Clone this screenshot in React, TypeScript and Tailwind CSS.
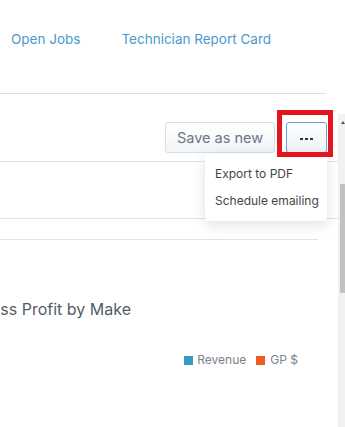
import React from "react";

const App = () => {
  return (
    <div className="relative w-[345px] h-[427px] overflow-hidden bg-white font-['Inter','Noto_Sans',sans-serif]">
      {/* Onglets */}
      <div className="flex h-[93px] items-start gap-[41px] pl-[11px] pt-[29px] text-[13.5px] text-[#4a9acb]">
        <span>Open Jobs</span>
        <span>Technician Report Card</span>
      </div>
      <div className="h-px w-[326px] bg-[#dedede]" />

      <div className="mt-[20px] flex">
        <div className="w-[338px]">
          {/* Barre d'actions */}
          <div className="flex justify-end gap-[11px] pr-[11px] pt-[8px]">
            <button className="h-[31px] w-[110px] rounded-[3px] border border-[#d7dde4] bg-gradient-to-b from-white to-[#f1f4f8] text-[14.5px] text-[#6b7686]">
              Save as new
            </button>
            <button className="flex h-[31px] w-[41px] items-center justify-center gap-[2px] rounded-[3px] border border-[#6d9fd8] bg-gradient-to-b from-white to-[#eef2f7] pt-[2px]">
              <span className="h-[2px] w-[3px] bg-[#333]" />
              <span className="h-[2px] w-[3px] bg-[#333]" />
              <span className="h-[2px] w-[3px] bg-[#333]" />
            </button>
          </div>
          <div className="mt-[8px] h-px w-full bg-[#dfe3e9]" />
          <div className="h-[56px]" />
          <div className="h-px w-full bg-[#dfe3e9]" />
          <div className="h-[20px]" />
          <div className="h-px w-[318px] bg-[#dfe3e9]" />

          {/* Graphique */}
          <div className="flex w-[131px] justify-end whitespace-nowrap pt-[57px] text-[16px] text-[#535c66]">
            Gross Profit by Make
          </div>
          <div className="mt-[30px] flex items-center justify-end pr-[40px] text-[12px] text-[#7a828c]">
            <span className="mr-[4px] h-[9px] w-[9px] bg-[#3a98c0]" />
            <span>Revenue</span>
            <span className="ml-[10px] mr-[5px] h-[9px] w-[9px] bg-[#f05a22]" />
            <span>GP $</span>
          </div>
        </div>

        {/* Barre de défilement */}
        <div className="relative h-[313px] w-[7px] bg-[#f1f1f1]">
          <svg className="absolute left-[3px] top-[7px]" width="4" height="3" viewBox="0 0 4 3">
            <path d="M2 0 L4 3 L0 3 Z" fill="#505050" />
          </svg>
          <div className="absolute left-[2px] top-[70px] h-[109px] w-[5px] bg-[#c1c1c1]" />
        </div>
      </div>

      {/* Menu déroulant */}
      <div className="absolute left-[205px] top-[153px] w-[122px] rounded-[4px] bg-white py-[9px] pl-[10px] text-[12px] text-[#444] shadow-[0_4px_14px_rgba(0,0,0,0.12)]">
        <div className="h-[25px] leading-[23px]">Export to PDF</div>
        <div className="h-[25px] leading-[27px]">Schedule emailing</div>
      </div>

      {/* Surlignage */}
      <div className="absolute left-[277px] top-[110px] h-[47px] w-[56px] border-[5px] border-[#e3151f]" />
    </div>
  );
};

export default App;
